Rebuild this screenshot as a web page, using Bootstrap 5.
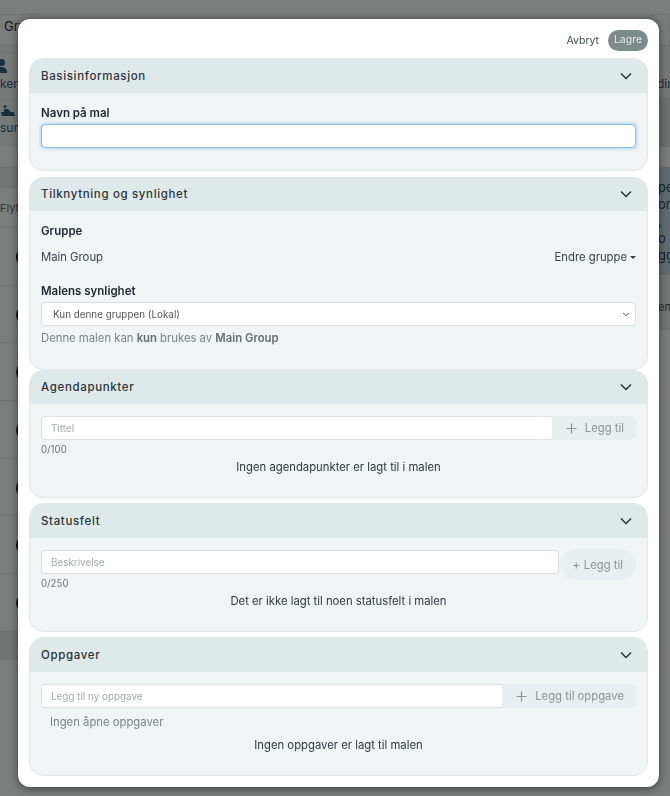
<!DOCTYPE html>
<html lang="nb">
<head>
    <meta charset="UTF-8" />
    <meta name="viewport" content="width=device-width, initial-scale=1" />
    <title>Ny mal</title>
    <link href="https://cdn.jsdelivr.net/npm/bootstrap@5.3.0/dist/css/bootstrap.min.css" rel="stylesheet" />
    <style>
        html, body {
            height: 100%;
            overflow: hidden;
        }

        body {
            background-color: #f6f8f8;
            font-family: 'Inter', sans-serif;
            color: #212a2e;
            font-size: 12px;
        }

        /* Siden bak modalen */
        .page-behind {
            height: 796px;
            overflow: hidden;
        }

        .side-left {
            width: 40px;
            overflow: hidden;
            color: #2f5f7d;
        }

        .side-right {
            width: 30px;
            overflow: hidden;
            color: #2f5f7d;
        }

        .strip {
            border-bottom: 1px solid #e3e6e6;
            white-space: nowrap;
        }

        .strip-top { height: 15px; }
        .strip-group { height: 30px; padding: 2px 0 0 4px; color: #333; font-size: 13px; }
        .strip-group-b { height: 8px; background-color: #eceeee; }
        .strip-person { height: 47px; font-size: 12px; line-height: 12px; background-color: #eef1f1; padding-top: 6px; }
        .strip-boat { height: 46px; font-size: 12px; line-height: 12px; background-color: #eef1f1; padding-top: 4px; }
        .strip-gap { height: 22px; }
        .strip-tabs { height: 20px; background-color: #e8ebeb; }
        .strip-move { height: 40px; color: #666; font-size: 11px; padding-top: 12px; }
        .strip-row { height: 57.7px; padding-top: 19px; }
        .strip-rest { height: 28px; background-color: #e6e8e8; }

        .row-dot {
            display: block;
            width: 20px;
            height: 20px;
            margin-left: 16px;
            border-radius: 50%;
            background-color: #222;
        }

        .right-top { height: 14px; }
        .right-input { height: 32px; margin-left: 8px; border: 1px solid #e2e4e4; border-radius: 6px 0 0 0; }
        .right-links { height: 51px; background-color: #eef1f1; padding: 31px 0 0 17px; font-size: 12px; line-height: 13px; }
        .right-grey { height: 50px; background-color: #dfe2e2; }
        .right-gap { height: 20px; }
        .right-info { height: 108px; background-color: #c7d7e0; padding: 12px 0 0 18px; font-size: 13px; line-height: 17px; color: #244a60; }
        .right-tab { height: 55px; padding: 24px 0 0 18px; color: #555; font-size: 11px; border-bottom: 1px solid #e3e6e6; background-color: #e6e8e8; }

        /* Modalen */
        .tpl-modal {
            position: absolute;
            top: 19px;
            left: 18.3px;
            width: 640.4px;
            height: 767.5px;
            z-index: 1060;
            background-color: #fff;
            border-radius: 12px;
            box-shadow: 0 1px 8px rgba(0,0,0,0.55);
            padding: 11px 10.7px 10px;
        }

        .tpl-top {
            height: 21px;
            margin-bottom: 7px;
        }

        .btn-cancel {
            font-size: 10.5px;
            color: #3f4a4f;
            padding: 0;
            border: 0;
            margin-right: 9px;
        }

        .btn-save {
            font-size: 10.5px;
            line-height: 1;
            height: 21px;
            width: 40px;
            padding: 0;
            border-radius: 11px;
            border: 0;
            color: #e4e9e9;
            background-color: #7c8b8b;
        }

        .tpl-card {
            background-color: #f0f4f5;
            border: 1px solid #dfe9ea;
            border-radius: 14px;
            overflow: hidden;
            margin-bottom: 6px;
        }

        .tpl-card .card-header {
            height: 35px;
            margin: -1px -1px 0;
            padding: 2px 16px 0 12px;
            background-color: #e0e9ea;
            border: 0;
            border-radius: 0;
            font-size: 11.5px;
            font-weight: 500;
            letter-spacing: 0.65px;
            color: #2b3438;
        }

        .tpl-card .card-header svg {
            margin-top: -2px;
        }

        .tpl-card .card-body {
            padding: 0 11px;
        }

        .tall-1 { height: 113px; }
        .tall-2 { height: 192.5px; margin-bottom: 0; }
        .tall-2 .card-header { height: 34px; }
        .tall-3 { height: 128px; margin-bottom: 5.5px; }
        .tall-3 .card-header { height: 34.5px; }
        .tall-4 { height: 129px; margin-bottom: 5px; }
        .tall-5 { height: 139px; margin-bottom: 0; }

        .tpl-label {
            font-size: 11.5px;
            font-weight: 600;
            line-height: 15px;
            color: #1f282c;
        }

        .tpl-text {
            font-size: 11.3px;
            line-height: 15px;
            color: #3a4347;
        }

        .tpl-hint {
            font-size: 11.3px;
            line-height: 15px;
            color: #7b8487;
        }

        .tpl-hint b { font-weight: 600; color: #666e71; }

        .tpl-count {
            font-size: 9.7px;
            line-height: 12px;
            color: #6f7679;
            margin-top: 4px;
        }

        .tpl-empty {
            font-size: 11.3px;
            line-height: 15px;
            color: #2f383c;
            text-align: center;
        }

        .tpl-input.form-control, .tpl-select.form-select {
            height: 24px;
            min-height: 24px;
            font-size: 9.9px;
            padding: 0 9px;
            border: 1px solid #dadfe0;
            border-radius: 4px;
            background-color: #fff;
            color: #555;
            box-shadow: none;
        }

        .tpl-input::placeholder { color: #a3a8aa; }

        .tpl-select.form-select {
            padding-left: 11px;
            background-size: 8px 7px;
            background-position: right 5px center;
        }

        .tpl-input.is-active {
            border-color: #8cc0e8;
            box-shadow: 0 0 3px 1px rgba(110,175,230,0.45);
        }

        .tpl-addon {
            height: 24px;
            flex: none;
            background-color: #e8eff0;
            border: 0;
            border-radius: 0 5px 5px 0;
            color: #8b9497;
            font-size: 11.3px;
            padding: 0 12px 0 14px;
        }

        .tpl-pill {
            height: 31px;
            flex: none;
            margin: -1px 0 -7px 1px;
            background-color: #e8eff0;
            border: 0;
            border-radius: 15.5px;
            color: #8b9497;
            font-size: 11.3px;
            padding: 0 13px 0 12px;
            white-space: nowrap;
        }

        .pill-plus {
            font-size: 13px;
        }

        .group-toggle {
            font-size: 11.3px;
            line-height: 15px;
            color: #3a4347;
            padding: 0;
            border: 0;
        }

        .caret-down {
            display: inline-block;
            width: 0;
            height: 0;
            margin-left: 3px;
            vertical-align: 2px;
            border-top: 3px solid #3a4347;
            border-left: 3px solid transparent;
            border-right: 3px solid transparent;
        }

        .gap-label { padding-top: 13px; }
        .gap-under { margin-bottom: 3px; }
        .gap-group { margin-top: 11px; }
        .gap-synlig { margin-top: 19px; }
        .gap-hint { margin-top: 5px; }
        .gap-field { margin-top: 12px; }
        .gap-none { margin-top: 7px; margin-left: 9px; }
    </style>
</head>
<body>

<!-- Siden bak -->
<div class="page-behind d-flex justify-content-between">
    <div class="side-left">
        <div class="strip strip-top"></div>
        <div class="strip strip-group">Gruppe</div>
        <div class="strip strip-group-b"></div>
        <div class="strip strip-person">
            <svg width="10" height="15" viewBox="0 0 10 15" class="d-block mb-1"><circle cx="1.5" cy="3.5" r="3.5" fill="#2f5f7d"/><path d="M-6 14c0-4 3-6 7-6s6 2 6 6z" fill="#2f5f7d"/></svg>
            kerer
        </div>
        <div class="strip strip-boat">
            <svg width="16" height="14" viewBox="0 0 16 14" class="d-block mb-1"><circle cx="5" cy="2.5" r="1.6" fill="#2f5f7d"/><path d="M1 8h3V5h4l3 3h3l1 4H2z" fill="#2f5f7d"/></svg>
            surs
        </div>
        <div class="strip strip-gap"></div>
        <div class="strip strip-tabs"></div>
        <div class="strip strip-move">Flytt</div>
        <div class="strip strip-row"><span class="row-dot"></span></div>
        <div class="strip strip-row"><span class="row-dot"></span></div>
        <div class="strip strip-row"><span class="row-dot"></span></div>
        <div class="strip strip-row"><span class="row-dot"></span></div>
        <div class="strip strip-row"><span class="row-dot"></span></div>
        <div class="strip strip-row"><span class="row-dot"></span></div>
        <div class="strip strip-row"><span class="row-dot"></span></div>
        <div class="strip strip-rest"></div>
    </div>
    <div class="side-right">
        <div class="right-top"></div>
        <div class="right-input"></div>
        <div class="right-links">dine</div>
        <div class="right-grey"></div>
        <div class="right-gap"></div>
        <div class="right-info">
            per<br>ors<br>, o<br>ggi
        </div>
        <div class="right-tab">enn</div>
    </div>
</div>
<div class="modal-backdrop fade show"></div>

<!-- Modal -->
<div class="tpl-modal">
    <div class="tpl-top d-flex justify-content-end align-items-center">
        <button class="btn btn-cancel" type="button">Avbryt</button>
        <button class="btn btn-save" type="button">Lagre</button>
    </div>

    <div class="card tpl-card tall-1">
        <div class="card-header d-flex justify-content-between align-items-center">
            Basisinformasjon
            <svg width="12" height="8" viewBox="0 0 12 8"><path d="M1 1.5l5 5 5-5" fill="none" stroke="#2b3438" stroke-width="1.5"/></svg>
        </div>
        <div class="card-body">
            <div class="tpl-label gap-label gap-under">Navn på mal</div>
            <input type="text" class="form-control tpl-input is-active" />
        </div>
    </div>

    <div class="card tpl-card tall-2">
        <div class="card-header d-flex justify-content-between align-items-center">
            Tilknytning og synlighet
            <svg width="12" height="8" viewBox="0 0 12 8"><path d="M1 1.5l5 5 5-5" fill="none" stroke="#2b3438" stroke-width="1.5"/></svg>
        </div>
        <div class="card-body">
            <div class="tpl-label gap-label">Gruppe</div>
            <div class="d-flex justify-content-between align-items-center gap-group">
                <span class="tpl-text">Main Group</span>
                <button class="btn group-toggle" type="button">Endre gruppe<span class="caret-down"></span></button>
            </div>
            <div class="tpl-label gap-synlig gap-under">Malens synlighet</div>
            <select class="form-select tpl-select">
                <option>Kun denne gruppen (Lokal)</option>
            </select>
            <div class="tpl-hint gap-hint">Denne malen kan <b>kun</b> brukes av <b>Main Group</b></div>
        </div>
    </div>

    <div class="card tpl-card tall-3">
        <div class="card-header d-flex justify-content-between align-items-center">
            Agendapunkter
            <svg width="12" height="8" viewBox="0 0 12 8"><path d="M1 1.5l5 5 5-5" fill="none" stroke="#2b3438" stroke-width="1.5"/></svg>
        </div>
        <div class="card-body">
            <div class="input-group flex-nowrap gap-field">
                <input type="text" class="form-control tpl-input" placeholder="Tittel" />
                <button class="btn tpl-addon d-flex align-items-center gap-2" type="button">
                    <svg width="11" height="11" viewBox="0 0 11 11"><path d="M5.5 0.5v10M0.5 5.5h10" stroke="#8b9497" stroke-width="1.2"/></svg>
                    Legg til
                </button>
            </div>
            <div class="tpl-count">0/100</div>
            <div class="tpl-empty mt-1">Ingen agendapunkter er lagt til i malen</div>
        </div>
    </div>

    <div class="card tpl-card tall-4">
        <div class="card-header d-flex justify-content-between align-items-center">
            Statusfelt
            <svg width="12" height="8" viewBox="0 0 12 8"><path d="M1 1.5l5 5 5-5" fill="none" stroke="#2b3438" stroke-width="1.5"/></svg>
        </div>
        <div class="card-body">
            <div class="d-flex align-items-start gap-field">
                <input type="text" class="form-control tpl-input" placeholder="Beskrivelse" />
                <button class="btn tpl-pill" type="button"><span class="pill-plus">+</span> Legg til</button>
            </div>
            <div class="tpl-count">0/250</div>
            <div class="tpl-empty mt-1">Det er ikke lagt til noen statusfelt i malen</div>
        </div>
    </div>

    <div class="card tpl-card tall-5">
        <div class="card-header d-flex justify-content-between align-items-center">
            Oppgaver
            <svg width="12" height="8" viewBox="0 0 12 8"><path d="M1 1.5l5 5 5-5" fill="none" stroke="#2b3438" stroke-width="1.5"/></svg>
        </div>
        <div class="card-body">
            <div class="input-group flex-nowrap gap-field">
                <input type="text" class="form-control tpl-input" placeholder="Legg til ny oppgave" />
                <button class="btn tpl-addon d-flex align-items-center gap-2" type="button">
                    <svg width="11" height="11" viewBox="0 0 11 11"><path d="M5.5 0.5v10M0.5 5.5h10" stroke="#8b9497" stroke-width="1.2"/></svg>
                    Legg til oppgave
                </button>
            </div>
            <div class="tpl-hint gap-none">Ingen åpne oppgaver</div>
            <div class="tpl-empty mt-2">Ingen oppgaver er lagt til malen</div>
        </div>
    </div>
</div>

<script src="https://cdn.jsdelivr.net/npm/bootstrap@5.3.0/dist/js/bootstrap.bundle.min.js"></script>
</body>
</html>
